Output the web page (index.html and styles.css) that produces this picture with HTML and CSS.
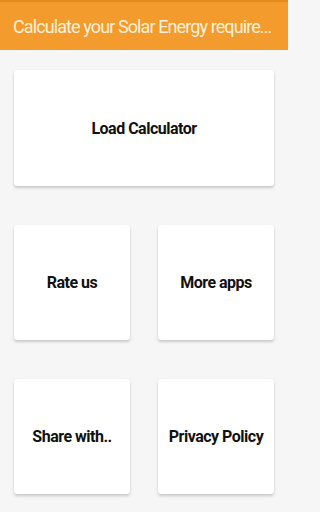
FILE: index.html
```html
<!DOCTYPE html>
<html>
<head>
<meta charset="utf-8">
<link rel="stylesheet" href="styles.css">
</head>
<body>
<header class="appbar">
  <h1 class="title">Calculate your Solar Energy require...</h1>
</header>
<main class="content">
  <div class="card wide">Load Calculator</div>
  <div class="row">
    <div class="card">Rate us</div>
    <div class="card">More apps</div>
  </div>
  <div class="row">
    <div class="card">Share with..</div>
    <div class="card">Privacy Policy</div>
  </div>
</main>
</body>
</html>
```
FILE: styles.css
```css
html {
  background: #f6f6f6;
}
body {
  margin: 0;
  padding: 0;
  width: 288px;
  min-height: 512px;
  background: #f6f6f6;
  font-family: Roboto, "Liberation Sans", sans-serif;
}
.appbar {
  height: 48px;
  border-top: 2px solid #e38a1f;
  background: #f39b2c;
  display: flex;
  align-items: center;
  padding: 0 4px 0 13px;
}
.title {
  margin: 0;
  font-size: 18px;
  font-weight: 400;
  color: #fdf1dc;
  white-space: nowrap;
  letter-spacing: -0.9px;
}
.content {
  padding: 20px 14px 0 14px;
  display: flex;
  flex-direction: column;
  gap: 39px;
}
.row {
  display: grid;
  grid-template-columns: 1fr 1fr;
  gap: 28px;
}
.card {
  background: #ffffff;
  border-radius: 3px;
  box-shadow: 0 2px 3px rgba(0,0,0,0.18), 0 0 1px rgba(0,0,0,0.08);
  height: 115px;
  display: flex;
  align-items: center;
  justify-content: center;
  font-size: 16px;
  font-weight: 700;
  letter-spacing: -0.5px;
  color: #111;
}
.card.wide {
  height: 116px;
}
```
